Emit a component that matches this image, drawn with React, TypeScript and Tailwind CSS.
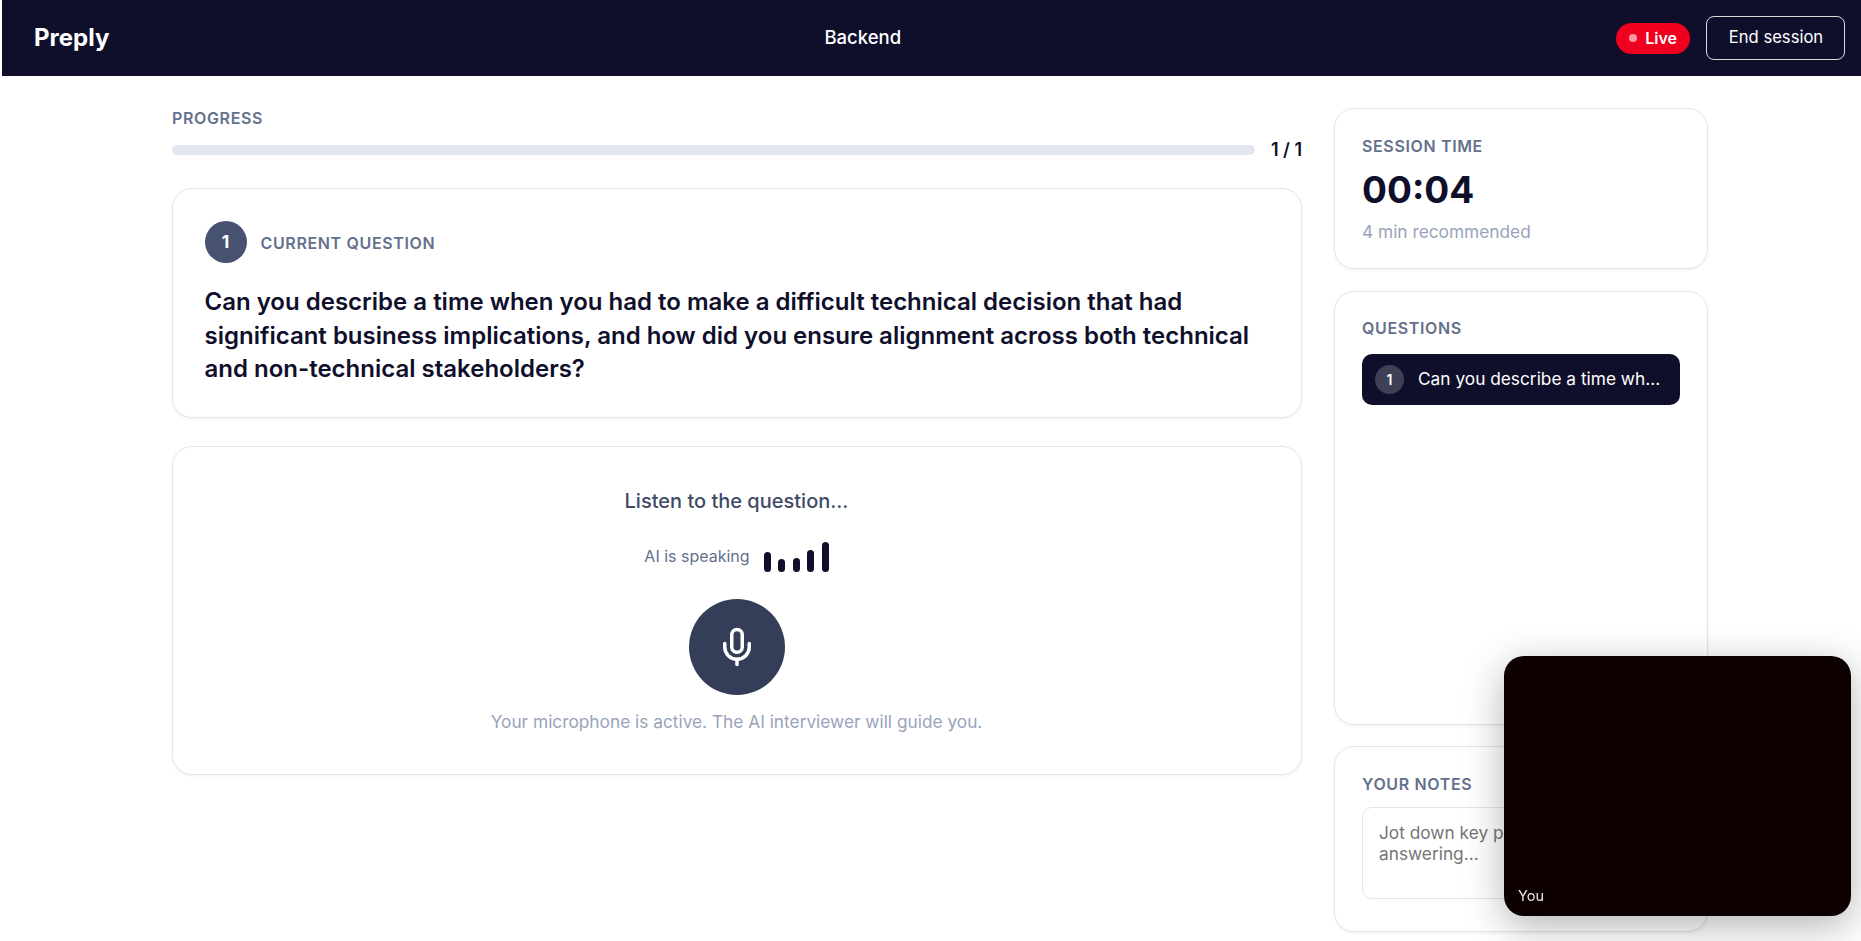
import { Mic } from "lucide-react";

const card = "rounded-[20px] border border-[#e2e6f0] bg-white shadow-[0_1px_3px_rgba(15,15,43,0.06)]";
const label = "text-[16px] font-semibold tracking-[0.64px] text-[#64708c] leading-[20px]";

export default function App() {
  return (
    <div className="h-screen overflow-hidden bg-white pl-[2px] font-['Inter',sans-serif]">
      <header className="flex h-[76px] items-center justify-between bg-[#0f0f2b] pl-8 pr-4 text-white">
        <div className="text-[24px] font-bold leading-none">Preply</div>
        <div className="text-[18.5px] font-medium">Backend</div>
        <div className="flex items-center gap-4">
          <div className="flex h-[31px] items-center gap-2 rounded-full bg-[#f0001e] px-[13px] text-[16px] font-semibold">
            <span className="h-2 w-2 rounded-full bg-white/60" />
            Live
          </div>
          <button className="h-[44px] w-[139px] rounded-lg border-[1.5px] border-white/85 pb-[2px] pl-[1px] text-[16.6px]">End session</button>
        </div>
      </header>
      <main className="ml-[170px] mr-[153px] flex gap-8 pt-8">
        <div className="flex min-w-0 flex-1 flex-col">
          <div className={label + " mb-[9px]"}>PROGRESS</div>
          <div className="flex items-center gap-4">
            <div className="h-[10px] flex-1 rounded-full bg-[#e2e6f0]" />
            <div className="text-[18px] font-semibold leading-[26px] text-[#0f0f2b]">1 / 1</div>
          </div>
          <section className={card + " mt-[25px] h-[230px] pb-8 pl-[31.5px] pr-8 pt-[32px]"}>
            <div className="flex items-center gap-[14px]">
              <div className="flex h-[42px] w-[42px] items-center justify-center rounded-full bg-[#475270] text-[17.5px] font-bold text-white">1</div>
              <div className={label + " pt-[2px]"}>CURRENT QUESTION</div>
            </div>
            <h1 className="mt-[22px] text-[24px] font-semibold leading-[33.6px] text-[#0f0f2b]">
              Can you describe a time when you had to make a difficult technical decision that had significant business implications, and how did you ensure alignment across both technical and non-technical stakeholders?
            </h1>
          </section>
          <section className={card + " mt-[28px] flex h-[329px] flex-col items-center pt-10 pr-[1px]"}>
            <div className="text-[20px] font-medium leading-[28px] text-[#3f4a66]">Listen to the question...</div>
            <div className="mt-[27px] flex h-[30px] items-end gap-[14px]">
              <span className="mb-[5px] text-[16px] leading-[22px] text-[#64708c]">AI is speaking</span>
              <div className="flex items-end gap-[7.5px]">
                <span className="h-[20px] w-[7px] rounded-full bg-[#0f0f2b]" />
                <span className="h-[13px] w-[7px] rounded-full bg-[#0f0f2b]" />
                <span className="h-[14px] w-[7px] rounded-full bg-[#0f0f2b]" />
                <span className="h-[22px] w-[7px] rounded-full bg-[#0f0f2b]" />
                <span className="h-[30px] w-[7px] rounded-full bg-[#0f0f2b]" />
              </div>
            </div>
            <div className="mt-[27px] flex h-[96px] w-[96px] items-center justify-center rounded-full bg-[#343e58] text-white">
              <Mic size={42} strokeWidth={2} />
            </div>
            <div className="mt-[15px] text-[17.3px] leading-[24px] text-[#99a3bc]">Your microphone is active. The AI interviewer will guide you.</div>
          </section>
        </div>
        <aside className="flex w-[374px] shrink-0 flex-col">
          <section className={card + " h-[161px] px-[27px] pt-[27px]"}>
            <div className={label}>SESSION TIME</div>
            <div className="mt-[10px] text-[37px] font-bold leading-[48px] text-[#0f0f2b]">00:04</div>
            <div className="mt-[6px] text-[17.3px] leading-[24px] text-[#99a3bc]">4 min recommended</div>
          </section>
          <section className={card + " mt-[22px] h-[434px] px-[27px] pt-[26px]"}>
            <div className={label}>QUESTIONS</div>
            <div className="mt-[16px] flex h-[51px] items-center gap-[14px] rounded-[10px] bg-[#0f0f2b] px-[13px] text-white">
              <span className="flex h-[29px] w-[29px] items-center justify-center rounded-full bg-white/20 text-[14px] font-semibold">1</span>
              <span className="mb-[1px] text-[17.3px]">Can you describe a time wh...</span>
            </div>
          </section>
          <section className={card + " mt-[21px] h-[186px] px-[27px] pt-[27px]"}>
            <div className={label}>YOUR NOTES</div>
            <textarea
              className="mt-[13px] block h-[92px] w-full resize-none rounded-[10px] border border-[#e2e6f0] px-4 py-[14px] text-[17.3px] leading-[21px] outline-none placeholder:text-[#757575]"
              placeholder="Jot down key points before answering..."
            />
          </section>
        </aside>
      </main>
      <div className="fixed bottom-[25px] right-[10px] h-[260px] w-[347px] overflow-hidden rounded-[20px] bg-[#0c0000] shadow-[0_10px_40px_rgba(0,0,0,0.3)]">
        <span className="absolute bottom-[10px] left-[14px] text-[14.5px] leading-[20px] text-white/90">You</span>
      </div>
    </div>
  );
}
